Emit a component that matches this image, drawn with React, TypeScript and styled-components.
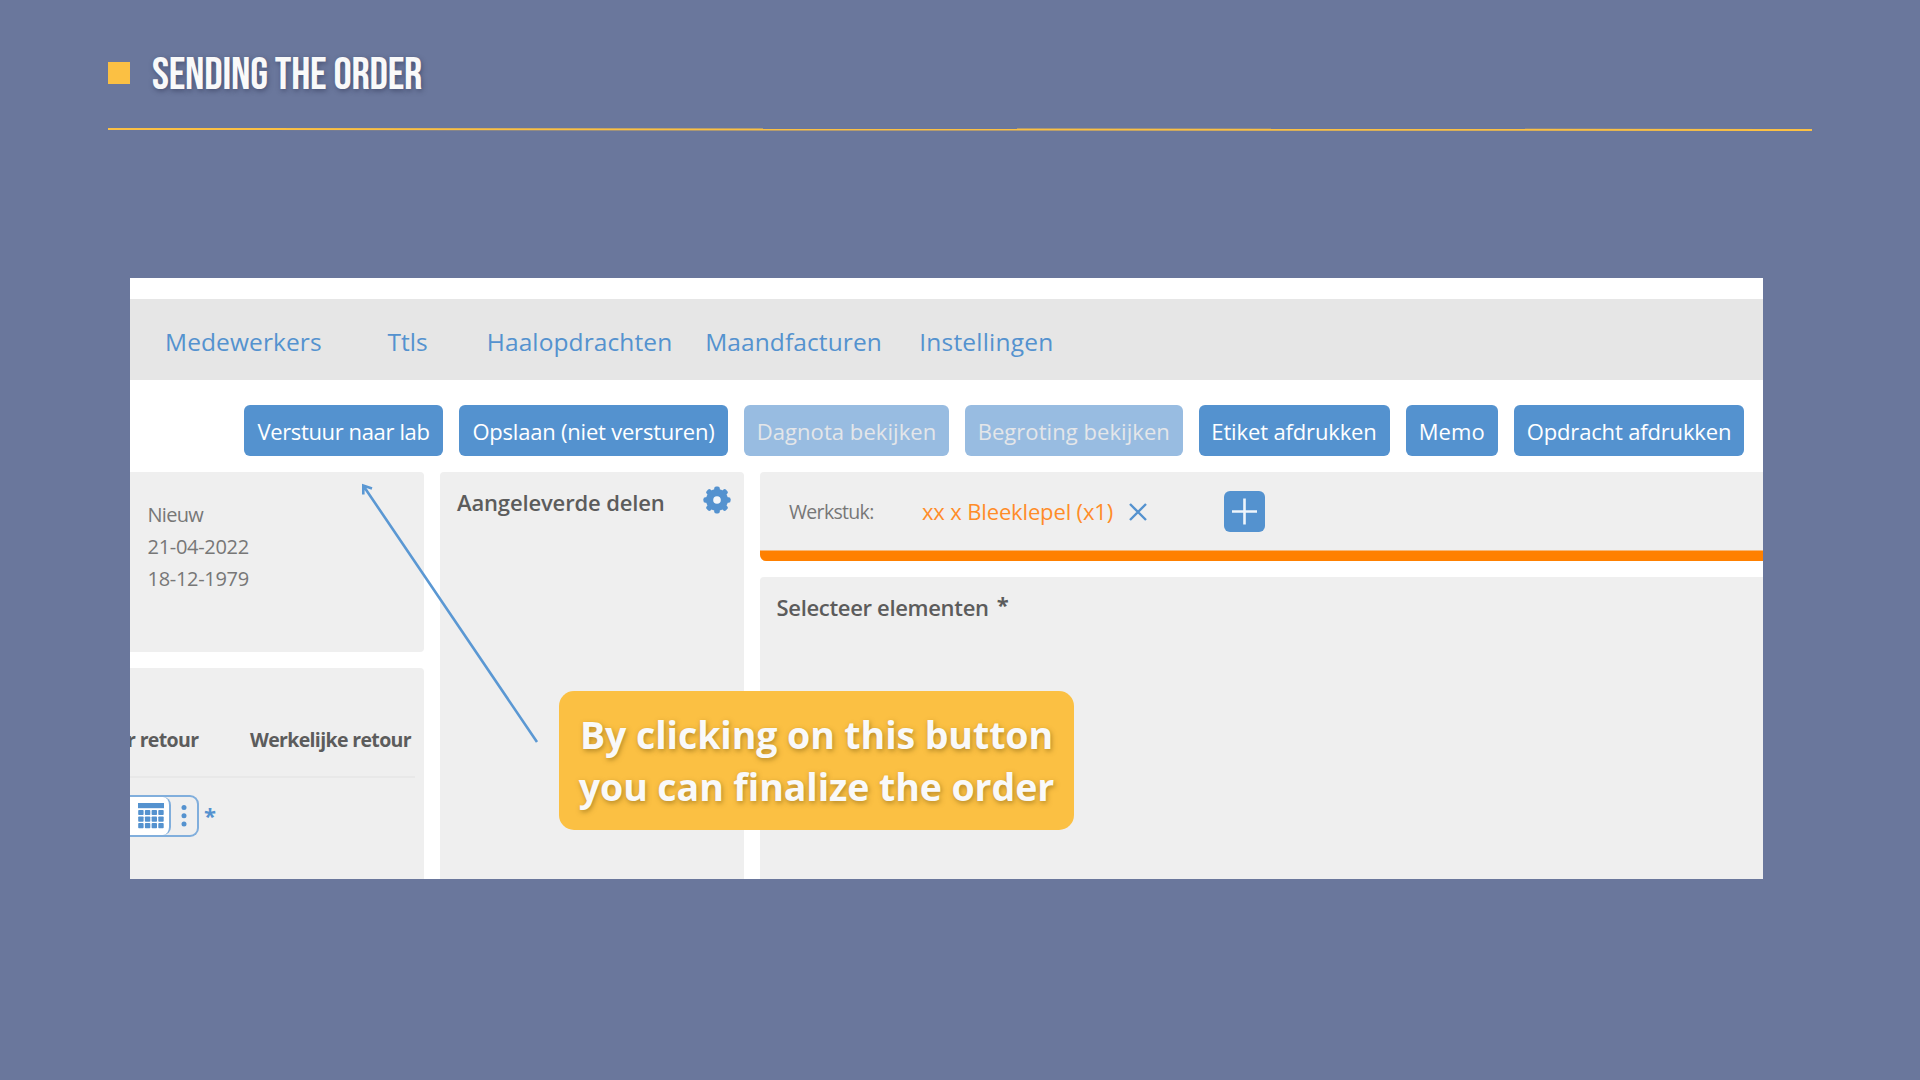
import React from "react";
import styled, { createGlobalStyle } from "styled-components";

const blue = "#5492cf";
const yellow = "#fbc043";
const card = "#efefef";

const GlobalStyle = createGlobalStyle`
  * { box-sizing: border-box; }
  body { margin: 0; background: #6a779c; }
`;

const Slide = styled.main`
  width: 1920px;
  height: 1080px;
  overflow: hidden;
  background: #6a779c;
  font-family: "Open Sans", "Noto Sans", sans-serif;
`;

const Header = styled.header`
  display: flex;
  align-items: center;
  gap: 21px;
  margin: 0 108px;
  padding-top: 17px;
  height: 128px;
`;

const Marker = styled.span`
  width: 22px;
  height: 22px;
  margin-top: 1px;
  background: ${yellow};
`;

const Title = styled.h1`
  margin: 0 0 -6px 1px;
  font: 400 45.5px/56px "Bebas Neue", "Roboto Condensed", sans-serif;
  letter-spacing: -0.22px;
  color: #f9f9f9;
  text-shadow: 1px 2px 5px rgba(40, 45, 75, 0.5);
`;

const Rule = styled.div`
  height: 2px;
  margin: 0 108px;
  background: ${yellow};
  transform: translateY(0.5px) rotate(0.034deg);
`;

const Screen = styled.section`
  position: relative;
  display: flex;
  flex-direction: column;
  width: 1632.5px;
  height: 601px;
  margin: 148px 0 0 130px;
  padding-top: 21px;
  background: #fff;
`;

const Nav = styled.nav`
  display: grid;
  grid-template-columns: 222.6px 99.2px 218.4px 214px auto;
  align-items: center;
  height: 81px;
  padding: 4px 0 0 35px;
  background: #e6e6e6;
`;

const NavLink = styled.a<{ $track?: number }>`
  font-size: 24.5px;
  letter-spacing: ${(p) => p.$track ?? 0.1}px;
  color: ${blue};
`;

const Toolbar = styled.div`
  display: flex;
  gap: 16px;
  height: 92px;
  padding: 25px 0 0 114px;
`;

const Button = styled.button<{ $width: number; $track: number }>`
  width: ${(p) => p.$width}px;
  height: 51px;
  flex: none;
  padding: 1px 0 0;
  border: 0;
  border-radius: 6px;
  background: ${blue};
  color: #fff;
  font: 400 22px/30px "Open Sans", "Noto Sans", sans-serif;
  letter-spacing: ${(p) => p.$track}px;
  white-space: nowrap;

  &:disabled {
    background: #98bce1;
    color: #e4e6e9;
  }
`;

const Body = styled.div`
  display: grid;
  grid-template-columns: 294px 304px 1fr;
  gap: 16px;
  flex: 1;
`;

const Column = styled.div`
  display: flex;
  flex-direction: column;
  gap: 16px;
`;

const PatientCard = styled.div`
  height: 180px;
  padding: 27px 0 0 17.5px;
  background: ${card};
  border-radius: 0 4px 4px 0;
`;

const Fact = styled.div<{ $track?: number }>`
  font-size: 20px;
  letter-spacing: ${(p) => p.$track ?? -0.3}px;
  line-height: 32px;
  color: #777;
`;

const ReturnCard = styled.div`
  flex: 1;
  overflow: hidden;
  background: ${card};
  border-radius: 0 4px 0 0;
`;

const ReturnHead = styled.div`
  display: flex;
  justify-content: space-between;
  align-items: center;
  width: 285px;
  height: 110px;
  padding: 34px 4px 0 0;
  border-bottom: 2px solid #e8e8e8;
`;

const ColumnTitle = styled.span`
  margin-left: -3px;
  font-size: 19.5px;
  font-weight: 700;
  letter-spacing: -0.64px;
  color: #5c5c5c;
  white-space: nowrap;
`;

const DateRow = styled.div`
  display: flex;
  gap: 5px;
  margin-top: 17px;
`;

const DateField = styled.div`
  display: flex;
  width: 69px;
  height: 42px;
  border: 2px solid #80aedc;
  border-left: 0;
  border-radius: 0 9px 9px 0;
`;

const DateInput = styled.div`
  display: flex;
  align-items: center;
  width: 41px;
  padding-left: 7.500px;
  background: #fff;
  border-right: 2px solid #80aedc;
  border-radius: 0 8px 8px 0;
`;

const MoreDots = styled.svg`
  margin: 7px 0 0 9px;
`;

const Required = styled.span<{ $blue?: boolean }>`
  margin-top: ${(p) => (p.$blue ? 5 : -2)}px;
  font-size: 22px;
  font-weight: 700;
  line-height: 30px;
  color: ${(p) => (p.$blue ? blue : "#5c5c5c")};
`;

const PartsCard = styled.div`
  display: flex;
  justify-content: space-between;
  align-items: flex-start;
  padding: 14px 13px 0 17px;
  background: ${card};
  border-radius: 4px 4px 0 0;
`;

const Heading = styled.h2<{ $track: number }>`
  margin: 0;
  font-size: 22px;
  font-weight: 600;
  letter-spacing: ${(p) => p.$track}px;
  line-height: 32px;
  color: #5c5c5c;
  white-space: nowrap;
`;

const WorkTabs = styled.div`
  display: flex;
  align-items: center;
  height: 89px;
  padding-left: 29px;
  background: linear-gradient(${card} 78px, #ff8000 79px);
  border-radius: 4px 0 0 6px;
`;

const WorkLabel = styled.span`
  width: 133px;
  margin-bottom: 10px;
  font-size: 19.5px;
  letter-spacing: -0.68px;
  color: #777;
`;

const WorkTab = styled.span`
  width: 207px;
  margin-bottom: 11px;
  font-size: 22px;
  letter-spacing: -0.15px;
  color: #ff8c28;
  white-space: nowrap;
`;

const CloseIcon = styled.svg`
  margin: 0 77px 10px 0;
`;

const AddButton = styled.button`
  width: 41px;
  height: 41px;
  margin-bottom: 11px;
  padding: 0;
  border: 0;
  border-radius: 6px;
  background: ${blue};
`;

const ElementsCard = styled.div`
  display: flex;
  flex: 1;
  gap: 8px;
  padding: 14px 0 0 16.5px;
  background: ${card};
  border-radius: 4px 0 0 0;
`;

const Arrow = styled.svg`
  position: absolute;
  left: 220px;
  top: 197px;
`;

const Callout = styled.div`
  position: absolute;
  left: 429px;
  top: 413px;
  width: 515px;
  height: 139px;
  padding-top: 18px;
  border-radius: 15px;
  background: ${yellow};
  color: #f9f9f9;
  font-size: 37.5px;
  font-weight: 700;
  letter-spacing: -0.08px;
  line-height: 52px;
  text-align: center;
  white-space: nowrap;
  text-shadow: 1px 2px 5px rgba(110, 80, 10, 0.5);
`;

const actions = [
  { label: "Verstuur naar lab", width: 199, track: -0.37 },
  { label: "Opslaan (niet versturen)", width: 269, track: -0.21 },
  { label: "Dagnota bekijken", width: 205, track: 0.06, disabled: true },
  { label: "Begroting bekijken", width: 217.5, track: 0.06, disabled: true },
  { label: "Etiket afdrukken", width: 191, track: -0.14 },
  { label: "Memo", width: 92.5, track: 0.1 },
  { label: "Opdracht afdrukken", width: 230, track: -0.16 },
];

const GearIcon = () => (
  <svg width="28" height="28" viewBox="-14 -14 28 28">
    {[0, 45, 90, 135].map((a) => (
      <rect key={a} x="-2.8" y="-13.6" width="5.6" height="27.2" rx="2" fill={blue} transform={`rotate(${a})`} />
    ))}
    <circle r="11" fill={blue} />
    <circle r="3.8" fill="#f4f7fa" />
  </svg>
);

const CalendarIcon = () => (
  <svg width="26" height="26" viewBox="0 0 26 26" fill={blue}>
    <rect width="26" height="5.2" />
    {[0, 1, 2, 3].map((c) =>
      [0, 1, 2].map((r) => (
        <rect key={`${c}-${r}`} x={0.2 + c * 6.7} y={6.9 + r * 6.6} width="5.4" height="5.2" rx="0.8" />
      ))
    )}
  </svg>
);

export default function App() {
  return (
    <Slide>
      <GlobalStyle />
      <Header>
        <Marker />
        <Title>SENDING THE ORDER</Title>
      </Header>
      <Rule />
      <Screen>
        <Nav>
          <NavLink>Medewerkers</NavLink>
          <NavLink $track={0}>Ttls</NavLink>
          <NavLink>Haalopdrachten</NavLink>
          <NavLink>Maandfacturen</NavLink>
          <NavLink $track={0.22}>Instellingen</NavLink>
        </Nav>
        <Toolbar>
          {actions.map((a) => (
            <Button key={a.label} $width={a.width} $track={a.track} disabled={a.disabled}>
              {a.label}
            </Button>
          ))}
        </Toolbar>
        <Body>
          <Column>
            <PatientCard>
              <Fact $track={-0.7}>Nieuw</Fact>
              <Fact>21-04-2022</Fact>
              <Fact>18-12-1979</Fact>
            </PatientCard>
            <ReturnCard>
              <ReturnHead>
                <ColumnTitle>r retour</ColumnTitle>
                <ColumnTitle>Werkelijke retour</ColumnTitle>
              </ReturnHead>
              <DateRow>
                <DateField>
                  <DateInput>
                    <CalendarIcon />
                  </DateInput>
                  <MoreDots width="8" height="24" viewBox="0 0 8 24" fill={blue}>
                    <circle cx="4" cy="3.5" r="2.5" />
                    <circle cx="4" cy="11.8" r="2.5" />
                    <circle cx="4" cy="20" r="2.5" />
                  </MoreDots>
                </DateField>
                <Required $blue>*</Required>
              </DateRow>
            </ReturnCard>
          </Column>
          <PartsCard>
            <Heading $track={-0.14}>Aangeleverde delen</Heading>
            <GearIcon />
          </PartsCard>
          <Column>
            <WorkTabs>
              <WorkLabel>Werkstuk:</WorkLabel>
              <WorkTab>xx x Bleeklepel (x1)</WorkTab>
              <CloseIcon width="18" height="18" viewBox="0 0 18 18" stroke={blue} strokeWidth="2.4">
                <path d="M1 1 17 17M17 1 1 17" />
              </CloseIcon>
              <AddButton>
                <svg width="41" height="41" viewBox="0 0 41 41" stroke="#eef5fc" strokeWidth="2.6">
                  <path d="M20.5 7.5v26M8 20.5h25" />
                </svg>
              </AddButton>
            </WorkTabs>
            <ElementsCard>
              <Heading $track={-0.32}>Selecteer elementen</Heading>
              <Required>*</Required>
            </ElementsCard>
          </Column>
        </Body>
        <Arrow width="200" height="275" viewBox="350 475 200 275" fill="none" stroke="#5b98d3" strokeWidth="2.6">
          <path d="M537 742 363.5 486M363.3 494.500V485.500L372 488.500" />
        </Arrow>
        <Callout>
          By clicking on this button
          <br />
          you can finalize the order
        </Callout>
      </Screen>
    </Slide>
  );
}
